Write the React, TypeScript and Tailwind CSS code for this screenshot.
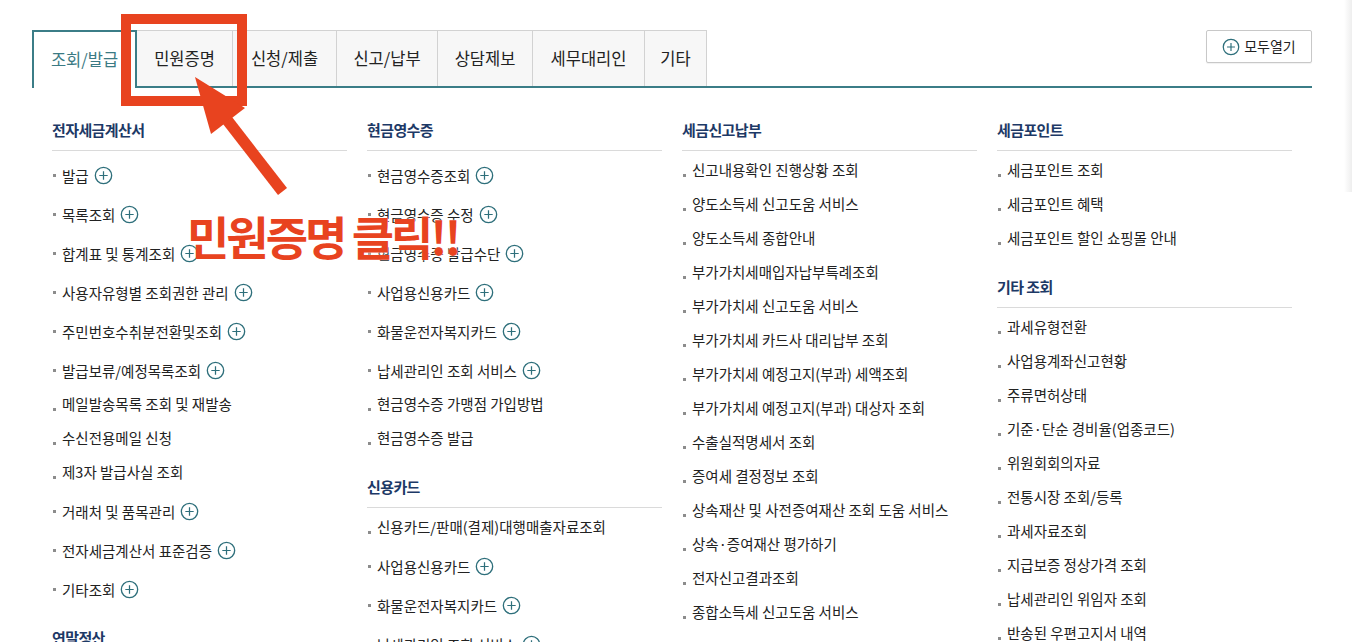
import { Fragment } from "react";

type Item = { label: string; more?: boolean };
type Section = { title: string; items: Item[] };

const tabs = [
    { label: "조회/발급", w: "w-[105px]", active: true },
    { label: "민원증명", w: "w-[96px]" },
    { label: "신청/제출", w: "w-[104px]" },
    { label: "신고/납부", w: "w-[101px]" },
    { label: "상담제보", w: "w-[95px]" },
    { label: "세무대리인", w: "w-[112px]" },
    { label: "기타", w: "w-[62px]" },
];

const columns: Section[][] = [
    [
        {
            title: "전자세금계산서",
            items: [
                { label: "발급", more: true },
                { label: "목록조회", more: true },
                { label: "합계표 및 통계조회", more: true },
                { label: "사용자유형별 조회권한 관리", more: true },
                { label: "주민번호수취분전환및조회", more: true },
                { label: "발급보류/예정목록조회", more: true },
                { label: "메일발송목록 조회 및 재발송" },
                { label: "수신전용메일 신청" },
                { label: "제3자 발급사실 조회" },
                { label: "거래처 및 품목관리", more: true },
                { label: "전자세금계산서 표준검증", more: true },
                { label: "기타조회", more: true },
            ],
        },
        { title: "연말정산", items: [{ label: "간소화자료 조회", more: true }] },
    ],
    [
        {
            title: "현금영수증",
            items: [
                { label: "현금영수증조회", more: true },
                { label: "현금영수증 수정", more: true },
                { label: "현금영수증 발급수단", more: true },
                { label: "사업용신용카드", more: true },
                { label: "화물운전자복지카드", more: true },
                { label: "납세관리인 조회 서비스", more: true },
                { label: "현금영수증 가맹점 가입방법" },
                { label: "현금영수증 발급" },
            ],
        },
        {
            title: "신용카드",
            items: [
                { label: "신용카드/판매(결제)대행매출자료조회" },
                { label: "사업용신용카드", more: true },
                { label: "화물운전자복지카드", more: true },
                { label: "납세관리인 조회 서비스", more: true },
            ],
        },
    ],
    [
        {
            title: "세금신고납부",
            items: [
                { label: "신고내용확인 진행상황 조회" },
                { label: "양도소득세 신고도움 서비스" },
                { label: "양도소득세 종합안내" },
                { label: "부가가치세매입자납부특례조회" },
                { label: "부가가치세 신고도움 서비스" },
                { label: "부가가치세 카드사 대리납부 조회" },
                { label: "부가가치세 예정고지(부과) 세액조회" },
                { label: "부가가치세 예정고지(부과) 대상자 조회" },
                { label: "수출실적명세서 조회" },
                { label: "증여세 결정정보 조회" },
                { label: "상속재산 및 사전증여재산 조회 도움 서비스" },
                { label: "상속·증여재산 평가하기" },
                { label: "전자신고결과조회" },
                { label: "종합소득세 신고도움 서비스" },
            ],
        },
    ],
    [
        {
            title: "세금포인트",
            items: [
                { label: "세금포인트 조회" },
                { label: "세금포인트 혜택" },
                { label: "세금포인트 할인 쇼핑몰 안내" },
            ],
        },
        {
            title: "기타 조회",
            items: [
                { label: "과세유형전환" },
                { label: "사업용계좌신고현황" },
                { label: "주류면허상태" },
                { label: "기준·단순 경비율(업종코드)" },
                { label: "위원회회의자료" },
                { label: "전통시장 조회/등록" },
                { label: "과세자료조회" },
                { label: "지급보증 정상가격 조회" },
                { label: "납세관리인 위임자 조회" },
                { label: "반송된 우편고지서 내역" },
            ],
        },
    ],
];

const PlusCircle = ({ size = 19 }: { size?: number }) => (
    <svg width={size} height={size} viewBox="0 0 20 20" className="shrink-0">
        <circle cx="10" cy="10" r="8.6" fill="white" stroke="#2e6f7b" strokeWidth="1.4" />
        <path d="M10 5.6v8.8M5.6 10h8.8" stroke="#2e6f7b" strokeWidth="1.3" />
    </svg>
);

const App = () => {
    return (
        <div className="relative h-[642px] overflow-hidden bg-white font-['Noto_Sans_CJK_KR','Noto_Sans',sans-serif] text-[#222]">
            <div className="ml-[32px] w-[1280px] pt-[30px]">
                {/* tabs */}
                <div className="flex h-[58px] items-start justify-between border-b-2 border-[#3b7d87]">
                    <ul className="flex">
                        {tabs.map((t) =>
                            t.active ? (
                                <li
                                    key={t.label}
                                    className={`${t.w} flex h-[58px] items-center justify-center border-2 border-b-0 border-[#3b7d87] bg-white pb-[2px] text-[16.5px] text-[#3b7a84]`}
                                >
                                    {t.label}
                                </li>
                            ) : (
                                <li
                                    key={t.label}
                                    className={`${t.w} flex h-[56px] items-center justify-center border-t border-r border-[#d2d2d2] bg-[#f7f7f7] text-[16.5px] text-[#222]`}
                                >
                                    {t.label}
                                </li>
                            )
                        )}
                    </ul>
                    <button className="flex h-[33px] w-[106px] items-center justify-center gap-[4px] rounded-[2px] border border-[#c8c8c8] bg-white text-[14px] text-[#222] shadow-[0_1px_1px_rgba(0,0,0,0.06)]">
                        <PlusCircle size={18} />
                        모두열기
                    </button>
                </div>

                {/* menu columns */}
                <div className="grid grid-cols-4 gap-x-[20px] px-[20px] pt-[31px]">
                    {columns.map((col, ci) => (
                        <div key={ci} className="flex flex-col">
                            {col.map((sec, si) => (
                                <div key={sec.title} className={si > 0 ? "mt-[19px]" : ""}>
                                    <h3 className="border-b border-[#dadada] pb-[9px] text-[15px] font-bold leading-[22px] tracking-[-0.6px] text-[#1d3966]">
                                        {sec.title}
                                    </h3>
                                    <ul className="pt-[4px] pl-[1px]">
                                        {sec.items.map((it) => (
                                            <Fragment key={it.label}>
                                                {it.more ? (
                                                    <li className="flex items-center pt-[10px] pb-[8px] text-[14.5px] leading-[21px]">
                                                        <span className="mr-[6px] h-[3px] w-[3px] shrink-0 bg-[#8c8c8c]" />
                                                        <span className="whitespace-nowrap">{it.label}</span>
                                                        <span className="ml-[5px] flex">
                                                            <PlusCircle />
                                                        </span>
                                                    </li>
                                                ) : (
                                                    <li className="flex items-start pt-[5px] pb-[9px] text-[14.5px] leading-[20px]">
                                                        <span className="mt-[14px] mr-[6px] h-[3px] w-[3px] shrink-0 bg-[#8c8c8c]" />
                                                        <span className="whitespace-nowrap">{it.label}</span>
                                                    </li>
                                                )}
                                            </Fragment>
                                        ))}
                                    </ul>
                                </div>
                            ))}
                        </div>
                    ))}
                </div>
            </div>

            {/* faint scrollbar shade at right */}
            <div className="absolute top-0 right-0 h-[192px] w-[8px] bg-gradient-to-r from-transparent to-[#eeeeee]" />

            {/* annotation overlay */}
            <svg className="pointer-events-none absolute top-0 left-0" width="1352" height="642">
                <rect x="126" y="19" width="116" height="82" fill="none" stroke="#e8431f" strokeWidth="10" />
                <polygon points="195,77 245,108 211,134" fill="#e8431f" />
                <polygon points="232,117 287,188 278,195 223,124" fill="#e8431f" />
            </svg>
            <span className="pointer-events-none absolute top-[212px] left-[187px] whitespace-nowrap font-['Noto_Sans_CJK_KR',sans-serif] text-[46px] font-bold leading-none tracking-[-3px] text-[#e8431f] [text-shadow:0_0_2px_#fff]">
                민원증명 클릭!!
            </span>
        </div>
    );
};

export default App;
